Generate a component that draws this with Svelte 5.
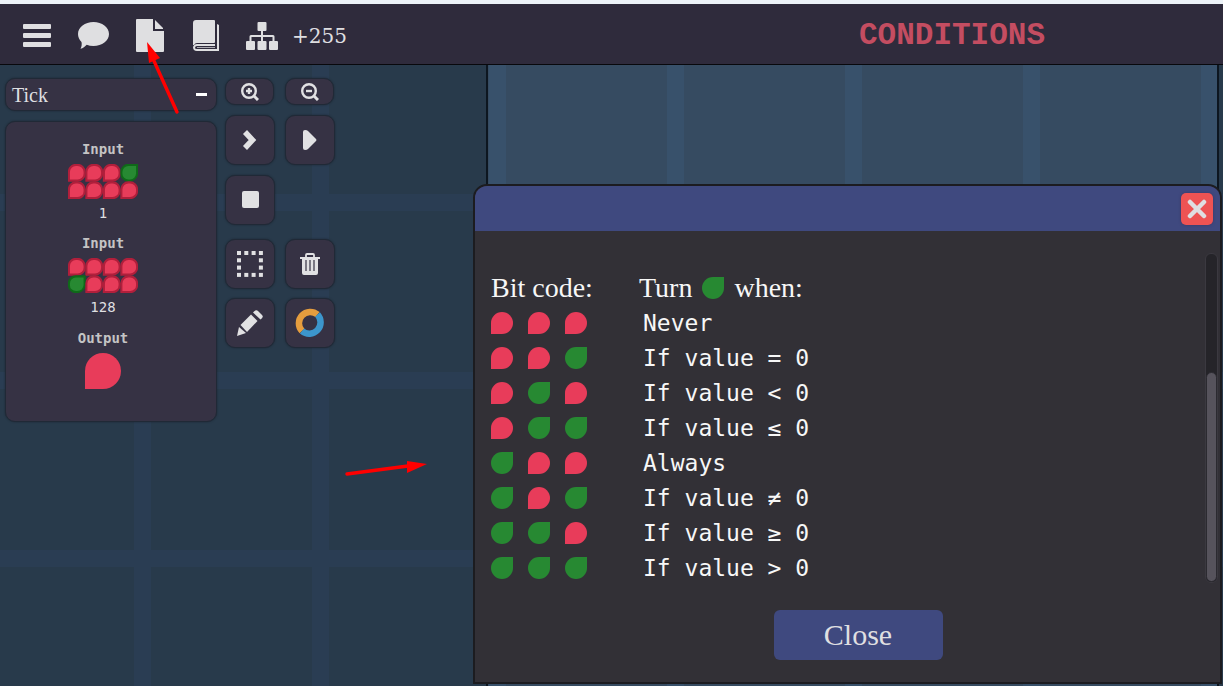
<script>
  const inputs = [
    { value: 1, bits: [0, 0, 0, 1, 0, 0, 0, 0] },
    { value: 128, bits: [0, 0, 0, 0, 1, 0, 0, 0] }
  ];
  const conditions = [
    'Never',
    'If value = 0',
    'If value < 0',
    'If value ≤ 0',
    'Always',
    'If value ≠ 0',
    'If value ≥ 0',
    'If value > 0'
  ].map((text, code) => ({ text, bits: [(code >> 2) & 1, (code >> 1) & 1, code & 1] }));

  let open = $state(true);
  let collapsed = $state(false);
</script>

{#snippet leaf(on, size)}
  <svg class="leaf" width={size} height={size} viewBox="0 0 22 22" aria-hidden="true">
    {#if on}
      <path d="M22 0V11A11 11 0 1 1 11 0Z" fill="#278932" />
    {:else}
      <path d="M0 22V11A11 11 0 1 1 11 22Z" fill="#e83c5a" />
    {/if}
  </svg>
{/snippet}

{#snippet byte(bits)}
  <svg class="byte" width="70" height="35" viewBox="0 0 80 40" aria-hidden="true">
    {#each bits as bit, i}
      <g transform="translate({(i % 4) * 20} {Math.floor(i / 4) * 20})">
        {#if bit}
          <path d="M19 1V11A9 9 0 0 1 11 19H9A8 8 0 0 1 1 11V9A8 8 0 0 1 9 1Z" fill="#278932" stroke="#0f6a19" stroke-width="2.4" />
        {:else}
          <path d="M1 19V9A8 8 0 0 1 9 1H11A8 8 0 0 1 19 9V11A8 8 0 0 1 11 19Z" fill="#e83c5a" stroke="#b01f3b" stroke-width="2.4" />
        {/if}
      </g>
    {/each}
  </svg>
{/snippet}

<div class="app">
  <header class="topbar">
    <nav>
      <button aria-label="Menu">
        <svg width="28" height="24" viewBox="0 0 28 24" fill="currentColor">
          <rect width="28" height="5" rx="1" /><rect y="9" width="28" height="5" rx="1" /><rect y="18" width="28" height="5" rx="1" />
        </svg>
      </button>
      <button aria-label="Chat">
        <svg width="31" height="27" viewBox="0 0 31 27" fill="currentColor">
          <path d="M15.500 0C24 0 31 5.300 31 12S24 24 15.500 24C13 24 10.700 23.600 8.700 22.800C7 24.500 5 26.300 2.500 26.800C3.600 25 4 22.500 3.500 20C1.300 17.800 0 15 0 12C0 5.300 7 0 15.500 0Z" />
        </svg>
      </button>
      <button aria-label="Document">
        <svg width="28" height="33" viewBox="0 0 28 33" fill="currentColor">
          <path d="M1 0H17V12H28V32Q28 33 27 33H1Q0 33 0 32V1Q0 0 1 0Z" /><path d="M19 1L27 9V10H19Z" />
        </svg>
      </button>
      <button class="book" aria-label="Manual">
        <svg width="26" height="32" viewBox="0 0 26 32" fill="currentColor">
          <path d="M3 0H21Q22 0 22 1V22Q22 23 21 23H4Q2 23 1 25L0 25V3Q0 0 3 0Z" />
          <path d="M24 4L26 5V31H4Q0 31 0 27Q1 24 4 24H22V26H4Q2 26 2 28Q2 29 4 29H24Z" />
          <path d="M4 27H22V28H4Z" opacity="0.700" />
        </svg>
      </button>
      <button class="level" aria-label="Levels">
        <svg width="32" height="28" viewBox="0 0 32 28" fill="currentColor">
          <rect x="11.500" width="9" height="9" rx="1" /><path d="M15 8H17V13H27Q28.500 13 28.500 14.500V20H26.500V15H17V20H15V15H5.500V20H3.500V14.500Q3.500 13 5 13H15Z" />
          <rect y="19" width="9" height="9" rx="1" /><rect x="11.500" y="19" width="9" height="9" rx="1" /><rect x="23" y="19" width="9" height="9" rx="1" />
        </svg>
      </button>
      <span class="score">+255</span>
    </nav>
    <h1>CONDITIONS</h1>
  </header>

  <main class="workspace">
    <div class="board"></div>
    <aside class="side">
      <button class="tick" onclick={() => (collapsed = !collapsed)}><span>Tick</span><span class="minus"></span></button>
      {#if !collapsed}
        <section class="panel">
          {#each inputs as input}
            <div class="pin">
              <h2>Input</h2>
              {@render byte(input.bits)}
              <p>{input.value}</p>
            </div>
          {/each}
          <div class="pin output">
            <h2>Output</h2>
            {@render leaf(0, 36)}
          </div>
        </section>
      {/if}
    </aside>

    <div class="tools">
      <div class="pair">
        <button class="tool flat" aria-label="Zoom in">
          <svg width="18" height="18" viewBox="0 0 18 18" fill="none" stroke="currentColor" stroke-width="2.400"><circle cx="8" cy="8" r="6.800" /><path d="M13 13L17 17" stroke-width="3" /><path d="M8 5V11M5 8H11" /></svg>
        </button>
        <button class="tool flat" aria-label="Zoom out">
          <svg width="18" height="18" viewBox="0 0 18 18" fill="none" stroke="currentColor" stroke-width="2.400"><circle cx="8" cy="8" r="6.800" /><path d="M13 13L17 17" stroke-width="3" /><path d="M5 8H11" /></svg>
        </button>
      </div>
      <div class="pair">
        <button class="tool" aria-label="Step">
          <svg width="16" height="20" viewBox="0 0 16 20" fill="none" stroke="currentColor" stroke-width="5.500"><path d="M3 2L10.500 10L3 18" stroke-linejoin="miter" /></svg>
        </button>
        <button class="tool" aria-label="Run">
          <svg width="16" height="20" viewBox="0 0 16 20" fill="currentColor"><path d="M1 2Q1 0 3 0Q5 0 6 1L14 9Q15 10 14 11L6 19Q5 20 3 20Q1 20 1 18Z" /></svg>
        </button>
        <button class="tool" aria-label="Stop">
          <svg width="18" height="18" viewBox="0 0 18 18"><rect x="1" width="17" height="17" rx="2" fill="currentColor" /></svg>
        </button>
      </div>
      <div class="pair edit">
        <button class="tool" aria-label="Select">
          <svg width="26" height="26" viewBox="0 0 26 26" fill="currentColor">
            {#each [0, 1, 2, 3] as r}
              {#each [0, 1, 2, 3] as c}
                {#if r === 0 || r === 3 || c === 0 || c === 3}
                  <rect x={c * 7.300} y={r * 7.300} width="4" height="4" />
                {/if}
              {/each}
            {/each}
          </svg>
        </button>
        <button class="tool" aria-label="Delete">
          <svg width="20" height="22" viewBox="0 0 20 22"><path d="M6 4V2Q6 1 7 1H13Q14 1 14 2V4" fill="none" stroke="currentColor" stroke-width="1.800" /><path d="M0 4H20V6H18V20Q18 22 16 22H4Q2 22 2 20V6H0Z" fill="currentColor" /><path d="M6 7V18M10 7V18M14 7V18" stroke="#363244" stroke-width="1.200" /></svg>
        </button>
        <button class="tool" aria-label="Draw">
          <svg width="26" height="26" viewBox="0 0 26 26" fill="currentColor"><path d="M0 26L2 17L9 23Z" /><path d="M3.500 15L14 4.500L20.500 11L10 22Z" /><path d="M16 2.500Q19 -1 21 1L25 5Q27 7 23.500 9.500Z" /></svg>
        </button>
        <button class="tool" aria-label="Colour">
          <svg width="30" height="30" viewBox="0 0 30 30" fill="none" stroke-width="6.500"><path d="M7 23A11.300 11.300 0 0 1 22.500 6.600" stroke="#e59d3e" /><path d="M22.500 6.600A11.300 11.300 0 0 1 7 23" stroke="#3c96cc" /></svg>
        </button>
      </div>
    </div>

    {#if open}
      <div class="dialog" role="dialog" aria-label="Bit codes">
        <div class="titlebar">
          <button class="x" aria-label="Close window" onclick={() => (open = false)}>
            <svg width="20" height="20" viewBox="0 0 20 20" fill="none" stroke="currentColor" stroke-width="4.500" stroke-linecap="round"><path d="M3 3L17 17M17 3L3 17" /></svg>
          </button>
        </div>
        <div class="content">
          <table>
            <thead>
              <tr><th>Bit code:</th><th><span class="turn">Turn {@render leaf(1, 22)} when:</span></th></tr>
            </thead>
            <tbody>
              {#each conditions as row}
                <tr>
                  <td><div class="bits">{#each row.bits as bit}{@render leaf(bit, 22)}{/each}</div></td>
                  <td class="rule">{row.text}</td>
                </tr>
              {/each}
            </tbody>
          </table>
          <div class="track"><div class="thumb"></div></div>
        </div>
        <div class="foot"><button class="close" onclick={() => (open = false)}>Close</button></div>
      </div>
    {/if}
  </main>

  <svg class="arrow first" width="34" height="74" viewBox="0 0 34 74" aria-hidden="true">
    <path d="M31 70L8 19" stroke="#f00" stroke-width="3.400" stroke-linecap="round" /><path d="M1 0L14 16L3 21Z" fill="#f00" />
  </svg>
  <svg class="arrow second" width="84" height="16" viewBox="0 0 84 16" aria-hidden="true">
    <path d="M3 13L64 5" stroke="#f00" stroke-width="3.400" stroke-linecap="round" /><path d="M83 3L63 0V12Z" fill="#f00" />
  </svg>
</div>

<style>
  :global(body) { margin: 0; }
  .app {
    position: relative;
    display: flex;
    flex-direction: column;
    box-sizing: border-box;
    min-height: 100vh;
    border-top: 4px solid #edf3f8;
    overflow: hidden;
    color: #dfdfe1;
    font-family: "Roboto Slab", "Liberation Serif", serif;
  }
  button {
    padding: 0;
    border: 0;
    background: none;
    color: inherit;
    font: inherit;
    cursor: pointer;
  }
  svg { display: block; flex: none; }
  h1, h2, p { margin: 0; }
  .topbar {
    display: flex;
    align-items: center;
    justify-content: space-between;
    box-sizing: border-box;
    height: 61px;
    padding: 3px 178px 0 23px;
    border-bottom: 1px solid #08080c;
    background: #2f2b3c;
  }
  nav { display: flex; align-items: center; gap: 27px; }
  .book { margin-left: 2px; }
  .level { margin-right: -13px; }
  .score { font: 20px/24px "DejaVu Serif", serif; }
  h1 { color: #c44d61; font: bold 31px/36px "Liberation Mono", monospace; }
  .workspace {
    --line: #2a3d53;
    position: relative;
    display: flex;
    flex: 1;
    align-items: flex-start;
    background:
      repeating-linear-gradient(90deg, transparent 0 134px, var(--line) 134px 151px, transparent 151px 178px),
      repeating-linear-gradient(180deg, transparent 0 129px, var(--line) 129px 146px, transparent 146px 178px),
      #283a4b;
  }
  .board {
    position: absolute;
    inset: 0 4px 0 486px;
    border: solid #0d1620;
    border-width: 0 2px;
    background:
      repeating-linear-gradient(90deg, transparent 0 1px, #38516b 1px 18px, transparent 18px 178px),
      #364b61;
  }
  .side {
    position: relative;
    display: flex;
    flex-direction: column;
    gap: 10px;
    width: 212px;
    padding: 13px 0 0 5px;
  }
  .tick, .panel, .tool {
    box-sizing: border-box;
    border: 1px solid #202936;
    background: #363244;
    box-shadow: 0 0 2px #1c2531;
  }
  .tick {
    display: flex;
    align-items: center;
    justify-content: space-between;
    height: 33px;
    padding: 0 9px 0 6px;
    border-radius: 10px;
    font-size: 20px;
    line-height: 24px;
  }
  .minus { width: 11px; height: 3px; background: #fff; }
  .panel {
    display: flex;
    flex-direction: column;
    gap: 14px;
    height: 301px;
    padding: 19px 16px 0 0;
    border-radius: 10px;
  }
  .pin {
    display: flex;
    flex-direction: column;
    align-items: center;
    font: 14px/16px "DejaVu Sans Mono", monospace;
  }
  .pin h2 { margin-bottom: 7px; color: #c4c4c4; font: bold 14px/16px "DejaVu Sans Mono", monospace; }
  .pin p { margin-top: 6px; }
  .output { margin-top: 1px; }
  .tools {
    position: relative;
    display: flex;
    flex-direction: column;
    gap: 10px;
    padding: 13px 0 0 8px;
  }
  .pair { display: grid; grid-template-columns: 50px 50px; gap: 10px; }
  .edit { margin-top: 4px; gap: 9px 10px; }
  .tool { display: grid; place-items: center; height: 50px; border-radius: 10px; color: #e1e1e3; }
  .flat { width: 49px; height: 27px; }
  .dialog {
    position: absolute;
    top: 119px;
    right: 1px;
    left: max(473px, 38%);
    display: flex;
    flex-direction: column;
    border: 2px solid #1c1c20;
    border-radius: 14px 14px 0 0;
    background: #323036;
    overflow: hidden;
  }
  .titlebar {
    display: flex;
    align-items: center;
    justify-content: flex-end;
    height: 45px;
    padding-right: 7px;
    background: #3f497f;
  }
  .x {
    display: grid;
    place-items: center;
    width: 32px;
    height: 32px;
    border-radius: 5px;
    background: #ee5353;
    box-shadow: 0 0 3px #3b3763;
  }
  .content { display: flex; justify-content: space-between; padding: 22px 2px 0 16px; }
  table { margin-top: 17px; border-collapse: collapse; color: #f7f7f7; }
  tr { height: 35px; }
  th, td { padding: 0; text-align: left; vertical-align: middle; }
  th { min-width: 148px; font-size: 28px; font-weight: 400; line-height: 34px; }
  .turn { display: flex; align-items: center; gap: 10px; }
  .bits { display: flex; gap: 15px; }
  .rule { padding-left: 4px; font: 23px/34px "DejaVu Sans Mono", monospace; white-space: pre; }
  .track {
    box-sizing: border-box;
    display: flex;
    align-items: flex-end;
    width: 13px;
    height: 330px;
    border: 1px solid #3b3940;
    border-radius: 6px;
    background: #252429;
  }
  .thumb { box-sizing: border-box; width: 11px; height: 64%; border: 1px solid #2b2a30; border-radius: 6px; background: #56535c; }
  .foot { display: flex; justify-content: center; padding: 25px 0 22px 21px; }
  .close { width: 169px; height: 50px; border-radius: 6px; background: #3f497f; font-size: 30px; line-height: 50px; }
  .arrow { position: absolute; pointer-events: none; }
  .first { top: 38px; left: 146px; }
  .second { top: 457px; left: 344px; }
</style>
